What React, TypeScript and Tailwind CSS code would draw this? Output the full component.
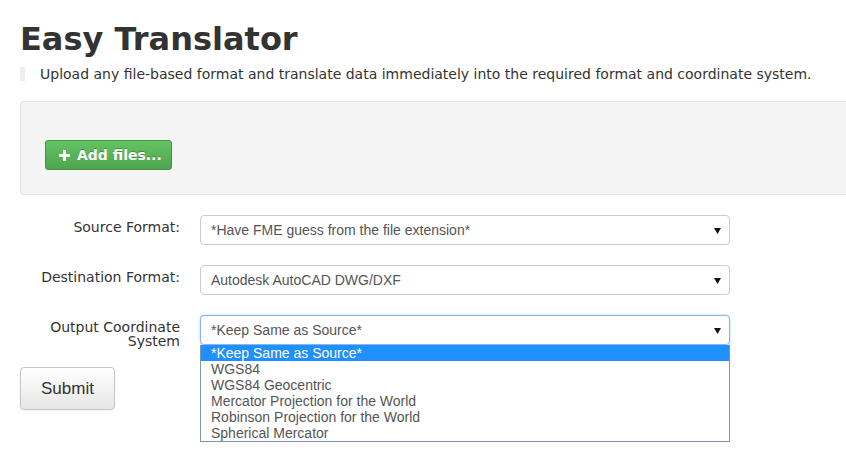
import React from 'react';

const verdana = "font-['DejaVu_Sans',Verdana,sans-serif]";
const arial = "font-['Liberation_Sans',Arial,sans-serif]";

const coordOptions = [
    '*Keep Same as Source*',
    'WGS84',
    'WGS84 Geocentric',
    'Mercator Projection for the World',
    'Robinson Projection for the World',
    'Spherical Mercator',
];

function Arrow() {
    return (
        <svg width="7" height="6" viewBox="0 0 7 6" className="absolute right-[8px] top-[12px]">
            <path d="M0 0 H7 L3.5 6 Z" fill="#111" />
        </svg>
    );
}

function FakeSelect({ value, focused, children }: { value: string; focused?: boolean; children?: React.ReactNode }) {
    return (
        <div className="relative w-[530px]">
            <div
                className={`relative h-[30px] rounded-[4px] bg-white pl-[10px] text-[14px] leading-[28px] text-[#555] ${arial} ${focused ? 'border border-[#8fb3f0] shadow-[0_0_2px_rgba(82,168,236,0.6)]' : 'border border-[#ccc]'}`}
            >
                {value}
                <Arrow />
            </div>
            {children}
        </div>
    );
}

function Row({ label, children }: { label: React.ReactNode; children: React.ReactNode }) {
    return (
        <div className="flex items-start mb-[20px]">
            <label className={`w-[160px] pt-[5px] text-right text-[14px] leading-[14px] text-[#333] ${verdana}`}>{label}</label>
            <div className="ml-[20px]">{children}</div>
        </div>
    );
}

export default function App() {
    return (
        <div className="w-[846px] h-[451px] overflow-hidden bg-white">
            <div className="ml-[20px] w-[940px]">
                <h1 className={`pt-[19px] text-[32px] leading-[40px] font-bold text-[#333] ${verdana}`}>Easy Translator</h1>
                <div className="mt-[8px] flex items-center h-[14px]">
                    <div className="w-[5px] h-[14px] bg-[#eee]" />
                    <p className={`ml-[15px] text-[14px] leading-[14px] text-[#333] ${verdana}`}>
                        Upload any file-based format and translate data immediately into the required format and coordinate system.
                    </p>
                </div>

                <div className="mt-[20px] h-[94px] rounded-[4px] border border-[#e3e3e3] bg-[#f4f4f4] pl-[24px] pt-[38px]">
                    <button className={`flex items-center h-[30px] w-[127px] rounded-[3px] border border-[#419641] bg-gradient-to-b from-[#62c462] to-[#51a351] pl-[13px] text-[14px] font-bold text-white [text-shadow:0_-1px_0_rgba(0,0,0,0.25)] ${verdana}`}>
                        <svg width="11" height="11" viewBox="0 0 11 11" className="mr-[7px]">
                            <path d="M4 0 H7 V4 H11 V7 H7 V11 H4 V7 H0 V4 H4 Z" fill="#fff" />
                        </svg>
                        Add files...
                    </button>
                </div>

                <div className="mt-[20px]">
                    <Row label="Source Format:">
                        <FakeSelect value="*Have FME guess from the file extension*" />
                    </Row>
                    <Row label="Destination Format:">
                        <FakeSelect value="Autodesk AutoCAD DWG/DXF" />
                    </Row>
                    <Row label={<>Output Coordinate<br />System</>}>
                        <FakeSelect value="*Keep Same as Source*" focused>
                            <ul className={`absolute left-0 top-[30px] z-10 w-[530px] border border-[#7a96b3] border-t-0 bg-white text-[14px] leading-[16px] text-[#555] ${arial}`}>
                                {coordOptions.map((o, i) => (
                                    <li key={o} className={`pl-[10px] h-[16px] ${i === 0 ? 'bg-[#1e90ff] text-white' : ''}`}>{o}</li>
                                ))}
                            </ul>
                        </FakeSelect>
                    </Row>
                </div>

                <button className={`-mt-[1px] h-[43px] w-[95px] rounded-[4px] border border-[#c5c5c5] bg-gradient-to-b from-white to-[#e6e6e6] text-[17px] text-[#333] shadow-[0_1px_2px_rgba(0,0,0,0.05)] ${arial}`}>
                    Submit
                </button>
            </div>
        </div>
    );
}
